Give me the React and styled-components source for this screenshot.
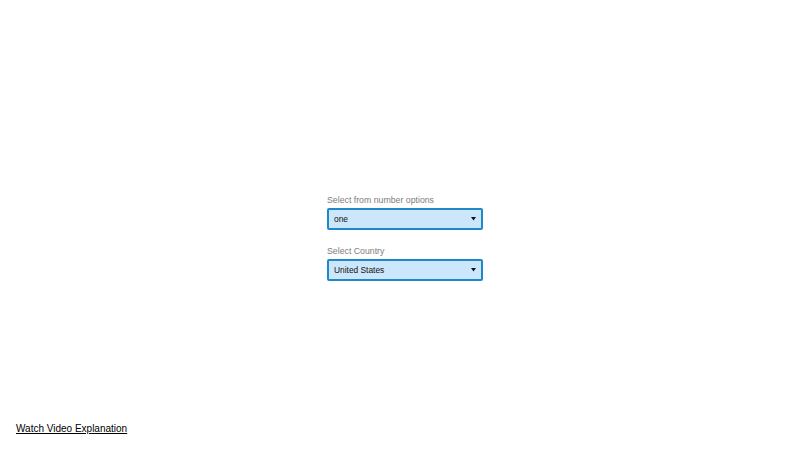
import styled, { createGlobalStyle } from "styled-components";

const Global = createGlobalStyle`
    html, body {
        margin: 0;
        padding: 0;
        background: #ffffff;
        font-family: "Liberation Sans", Arial, sans-serif;
    }
`

const opcoes = ["one", "two", "three"];
const paises = ["United States", "Canada", "Mexico"];

export default function App() {
    return (
        <Page>
            <Global />
            <Main>
                <Campo>
                    <Rotulo>Select from number options</Rotulo>
                    <Caixa>
                        <Seletor defaultValue="one">
                            {opcoes.map(o => <option key={o}>{o}</option>)}
                        </Seletor>
                        <Seta viewBox="0 0 6 4"><path d="M0 0H6L3 4Z" /></Seta>
                    </Caixa>
                </Campo>
                <Campo>
                    <Rotulo>Select Country</Rotulo>
                    <Caixa>
                        <Seletor defaultValue="United States">
                            {paises.map(p => <option key={p}>{p}</option>)}
                        </Seletor>
                        <Seta viewBox="0 0 6 4"><path d="M0 0H6L3 4Z" /></Seta>
                    </Caixa>
                </Campo>
            </Main>
            <Rodape>
                <Video href="#">Watch Video Explanation</Video>
            </Rodape>
        </Page>
    )
}

const Page = styled.div`
    width: 100%;
    height: 450px;
    display: flex;
    flex-direction: column;
`
const Main = styled.div`
    flex: 1;
    display: flex;
    flex-direction: column;
    align-items: center;
    padding-top: 195px;
    padding-left: 10px;
    gap: 16px;
`
const Campo = styled.div`
    display: flex;
    flex-direction: column;
    width: 156px;
`
const Rotulo = styled.label`
    font-size: 8.75px;
    line-height: 11px;
    color: #7d7d7d;
    margin-bottom: 2px;
`
const Caixa = styled.div`
    position: relative;
    width: 156px;
    height: 22px;
`
const Seletor = styled.select`
    appearance: none;
    -webkit-appearance: none;
    width: 100%;
    height: 100%;
    box-sizing: border-box;
    border: 2px solid #1f88c9;
    border-radius: 2px;
    background-color: #cce7fb;
    color: #111111;
    font-family: "Liberation Sans", Arial, sans-serif;
    font-size: 8.4px;
    padding: 0 0 0 5px;
    outline: none;
`
const Seta = styled.svg`
    position: absolute;
    right: 7px;
    top: 9px;
    width: 5px;
    height: 3.5px;
    fill: #111111;
    pointer-events: none;
`
const Rodape = styled.div`
    padding: 0 0 14px 16px;
`
const Video = styled.a`
    font-size: 10px;
    line-height: 12px;
    color: #000000;
    text-decoration: underline;
`
